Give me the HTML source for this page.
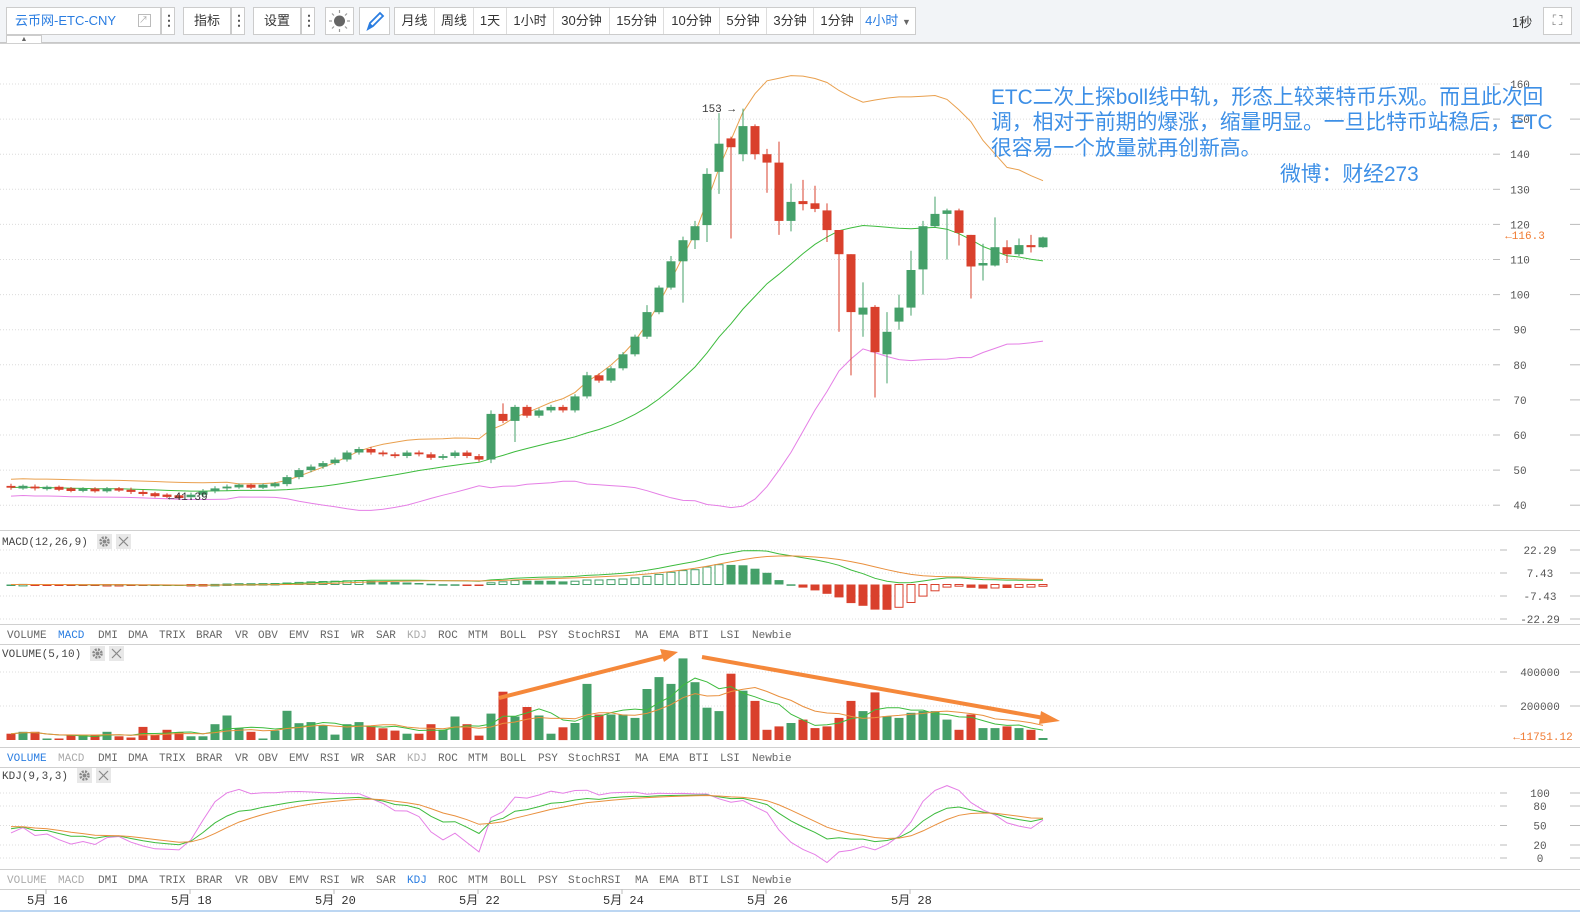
<!DOCTYPE html>
<html><head><meta charset="utf-8"><style>
*{margin:0;padding:0;box-sizing:border-box}
body{width:1580px;height:913px;overflow:hidden;background:#fff;font-family:"Liberation Sans","Noto Sans CJK SC",sans-serif;position:relative}
#tb{position:absolute;left:0;top:0;width:1580px;height:43px;background:#f2f4f7;border-bottom:1px solid #c8c8c8}
.b{position:absolute;top:7px;height:28px;background:#fff;border:1px solid #ccc;font-size:13px;color:#333;line-height:26px;text-align:center}
.dots{position:absolute;top:7px;height:28px;width:14px;border:1px solid #ccc;background:#fff;color:#555;font-size:14px;line-height:24px;text-align:center;font-weight:bold}
.pg{position:absolute;top:7px;left:394px;height:28px;border:1px solid #ccc;background:#fff;display:flex}
.pg span{display:block;height:26px;line-height:26px;font-size:13px;color:#333;text-align:center;border-right:1px solid #ddd}
svg{position:absolute;left:0;top:0}
</style></head><body>
<div id="tb">
<div class="b" style="left:6px;width:155px;text-align:left;padding-left:8px;color:#2a7de1">云币网-ETC-CNY<span style="position:absolute;left:131px;top:6px;width:13px;height:13px;border:1px solid #bbb;font-size:9px;line-height:11px;color:#aaa">↗</span></div>
<div class="dots" style="left:161px">⋮</div>
<div class="b" style="left:183px;width:48px">指标</div>
<div class="dots" style="left:231px">⋮</div>
<div class="b" style="left:253px;width:48px">设置</div>
<div class="dots" style="left:301px">⋮</div>
<div class="b" style="left:325px;width:29px"><svg width="27" height="26" style="position:static"><circle cx="13.5" cy="13" r="5.5" fill="#666"/><g stroke="#999" stroke-width="1.2"><line x1="13.5" y1="2" x2="13.5" y2="5"/><line x1="13.5" y1="21" x2="13.5" y2="24"/><line x1="3" y1="13" x2="6" y2="13"/><line x1="21" y1="13" x2="24" y2="13"/><line x1="6" y1="5.5" x2="8" y2="7.5"/><line x1="19" y1="18.5" x2="21" y2="20.5"/><line x1="6" y1="20.5" x2="8" y2="18.5"/><line x1="19" y1="7.5" x2="21" y2="5.5"/></g></svg></div>
<div class="b" style="left:359px;width:31px"><svg width="29" height="26" style="position:static"><path d="M8 21 L10 15 L20 5 L23 8 L13 18 Z" fill="none" stroke="#2a7de1" stroke-width="1.8"/><path d="M8 21 L10 15 L13 18Z" fill="#2a7de1"/></svg></div>
<div class="pg">
<span style="width:40px">月线</span><span style="width:39px">周线</span><span style="width:33px">1天</span><span style="width:47px">1小时</span><span style="width:56px">30分钟</span><span style="width:54px">15分钟</span><span style="width:56px">10分钟</span><span style="width:47px">5分钟</span><span style="width:47px">3分钟</span><span style="width:47px">1分钟</span><span style="width:54px;color:#2a7de1;border-right:none">4小时 <span style="display:inline;border:none;font-size:9px;color:#666">▼</span></span>
</div>
<div style="position:absolute;left:1512px;top:12px;font-size:13px;color:#333">1秒</div>
<div class="b" style="left:1543px;width:29px;color:#777;font-size:14px;line-height:24px">⛶</div>
<div style="position:absolute;left:6px;top:35px;width:36px;height:8px;background:#fff;border:1px solid #ccc;border-bottom:none;font-size:7px;line-height:8px;text-align:center;color:#666">▲</div>
</div>
<svg id="s" width="1580" height="913" style="top:0"></svg>
<script>
var cl=[45,45.3,44.8,45,44.6,44.3,44.5,44.2,44.6,44.4,43.8,43.2,42.8,42.6,42.3,43,44,44.8,45.3,45.6,45.2,45.6,46,
48,50,51,52,53,55,56,55,54.5,54,55,54.5,53.5,54,55,54,53,
66,64,68,65.5,67,68,67,71,77,75.5,79,83,88,95,102,109.5];
var late=[[109.5,115.5,116.5,97.7],[115.5,119.5,121,113],[119.8,134.4,136,115],[135,143,151.7,128.7],[144.5,142,145,116],[140,148,153,138],[148,140,148.5,138.5],[140,137.6,141.5,129],[137.6,121,143.6,117],[121,126.4,131.6,118],[126.4,126,132.7,124],[126,124.4,131,123.5],[124,118.4,126,115],[118.4,111.5,118.4,89.4],[111.5,95,111.5,77],[94.3,96.3,103.5,88],[96.5,83.6,97,70.7],[83,89.4,95,74.7],[92.3,96.3,100,90],[96.3,107,112.5,94],[107.2,119.5,121,100],[119.5,123,127.9,119],[123,124,124.5,110],[124,117.6,124.5,114],[117,108,117,98.9],[108.3,109,114.5,104],[108.3,113.5,122,108],[113.5,111.5,115.5,109],[111.5,114.1,116,111],[114.1,113.5,117,112],[113.5,116.3,116.5,113.3]];
var O=[],C=[],H=[],L=[],N=87;
for(var i=0;i<56;i++){var o=i?cl[i-1]:45.5,c=cl[i];O.push(o);C.push(c);H.push(Math.max(o,c)+0.6);L.push(Math.min(o,c)-0.6);}
H[41]=69;L[42]=58;H[40]=67;L[40]=52;H[48]=78;H[53]=97;H[55]=111;
late.forEach(function(a){O.push(a[0]);C.push(a[1]);H.push(a[2]);L.push(a[3]);});
var V=[37000,48000,48000,9000,9000,28000,28000,28000,48000,22000,15000,77000,30000,60000,45000,22000,22000,93000,144000,69000,48000,9000,55000,172000,99000,105000,85000,32000,93000,105000,80000,69000,55000,37000,37000,93000,60000,138000,93000,26000,155000,284000,138000,194000,144000,37000,75000,100000,330000,150000,150000,150000,130000,300000,370000,330000,480000,340000,190000,170000,390000,290000,230000,60000,80000,100000,120000,70000,80000,130000,230000,170000,280000,140000,130000,160000,170000,170000,120000,60000,150000,70000,70000,80000,70000,60000,11751];
function X(i){return 11+12*i}
function Y(p){return 84+(160-p)*3.51}
function MY(v){return 584.5-v*1.548}
function VY(v){return 740-v*0.00017}
function KY(v){return 858-v*0.65}
var G='#45a069',R='#d9402c',s='';
function ln(x1,y1,x2,y2,c,w,d){s+='<line x1="'+x1+'" y1="'+y1+'" x2="'+x2+'" y2="'+y2+'" stroke="'+c+'" stroke-width="'+(w||1)+'"'+(d?' stroke-dasharray="'+d+'"':'')+'/>';}
function tx(x,y,t,c,sz,anc,ff){s+='<text x="'+x+'" y="'+y+'" fill="'+(c||'#555')+'" font-size="'+(sz||11)+'" font-family="'+(ff||'Liberation Mono,monospace')+'"'+(anc?' text-anchor="'+anc+'"':'')+'>'+t+'</text>';}
function pl(arr,fy,c,st){var p='';for(var i=st||0;i<N;i++){if(arr[i]==null)continue;p+=(p?'L':'M')+X(i)+' '+fy(arr[i]).toFixed(1);}s+='<path d="'+p+'" fill="none" stroke="'+c+'" stroke-width="1"/>';}
[43,530,624,644,747,767,869,889].forEach(function(y){ln(0,y+.5,1580,y+.5,'#d0d0d0');});
ln(0,911,1580,911,'#bcd6f2',2);
function grid(y,lab,col,cx,gx){cx=cx||1540;gx=gx||1497;ln(0,y,gx,y,'#dcdcdc',1,'1,2');ln(gx+3,y,gx+10,y,'#bbb');ln(1570,y,1580,y,'#bbb');tx(cx,y+4,lab,col||'#555',11,'middle');}
for(var p=40;p<=160;p+=10)grid(Y(p),p,null,1520,1490);
[22.29,7.43,-7.43,-22.29].forEach(function(v){grid(MY(v),v);});
grid(VY(400000),'400000');grid(VY(200000),'200000');
[100,80,50,20,0].forEach(function(v){grid(KY(v),v);});
tx(1525,239,'←116.3','#f07a30',11,'middle');
tx(1543,740,'←11751.12','#f07a30',11,'middle');
var MA=[],UP=[],DN=[];
for(var i=0;i<N;i++){var n=Math.min(i+1,20),sm=0;for(var j=i-n+1;j<=i;j++)sm+=C[j];var m=sm/n,v=0;for(var j=i-n+1;j<=i;j++)v+=(C[j]-m)*(C[j]-m);var sd=Math.sqrt(v/n);if(n<20)sd=Math.max(sd,1.2);MA.push(m);UP.push(m+2*sd);DN.push(m-2*sd);}
pl(UP,Y,'#e9a04e');pl(DN,Y,'#e57fe6');pl(MA,Y,'#3dbb3d');
for(var i=0;i<N;i++){var up=C[i]>=O[i],c=up?G:R,x=X(i);ln(x,Y(H[i]),x,Y(L[i]),c);var t=Y(Math.max(O[i],C[i])),b=Y(Math.min(O[i],C[i]));if(b-t<1.5){t-=0.8;b+=0.8;}s+='<rect x="'+(x-4.5)+'" y="'+t.toFixed(1)+'" width="9" height="'+(b-t).toFixed(1)+'" fill="'+c+'"/>';}
tx(735,112,'153 →','#333',11,'end');tx(168,500,'←41.39','#333',11);
var af='Liberation Sans,Noto Sans CJK SC,sans-serif';
tx(991,104,'ETC二次上探boll线中轨，形态上较莱特币乐观。而且此次回','#3d8fe6',20.8,null,af);
tx(991,129,'调，相对于前期的爆涨，缩量明显。一旦比特币站稳后，ETC','#3d8fe6',20.8,null,af);
tx(991,155,'很容易一个放量就再创新高。','#3d8fe6',20.8,null,af);
tx(1280,181,'微博：财经273','#3d8fe6',20.8,null,af);
function ema(a,n){var r=[],k=2/(n+1);a.forEach(function(v,i){r.push(i?r[i-1]+k*(v-r[i-1]):v)});return r;}
var e12=ema(C,12),e26=ema(C,26),DIF=e12.map(function(v,i){return v-e26[i]}),DEA=ema(DIF,9);
for(var i=0;i<N;i++){var h=2*(DIF[i]-DEA[i])*1.1,ph=i?2*(DIF[i-1]-DEA[i-1])*1.1:0,x=X(i),y0=584.5,y1=MY(h);var c=h>=0?G:R;var t=Math.min(y0,y1),hh=Math.max(Math.abs(y1-y0),1.5);var hollow=(h>=0&&h>ph)||(h<0&&h>ph);
if(hollow)s+='<rect x="'+(x-4)+'" y="'+t.toFixed(1)+'" width="8" height="'+hh.toFixed(1)+'" fill="#fff" stroke="'+c+'"/>';else s+='<rect x="'+(x-4.5)+'" y="'+t.toFixed(1)+'" width="9" height="'+hh.toFixed(1)+'" fill="'+c+'"/>';}
pl(DIF,MY,'#3dbb3d');pl(DEA,MY,'#e9903e');
for(var i=0;i<N;i++){var c=C[i]>=O[i]?G:R,y=VY(V[i]);s+='<rect x="'+(X(i)-4.5)+'" y="'+y.toFixed(1)+'" width="9" height="'+(740-y).toFixed(1)+'" fill="'+c+'"/>';}
function sma(a,n){return a.map(function(v,i){var k=Math.min(i+1,n),t=0;for(var j=i-k+1;j<=i;j++)t+=a[j];return t/k;});}
pl(sma(V,5),VY,'#3dbb3d');pl(sma(V,10),VY,'#e9903e');
s+='<line x1="499" y1="698" x2="664" y2="656" stroke="#f5883a" stroke-width="4"/><polygon points="678,652 660,649 664,662" fill="#f5883a"/>';
s+='<line x1="702" y1="657" x2="1044" y2="718" stroke="#f5883a" stroke-width="4"/><polygon points="1060,721 1041,711 1039,724" fill="#f5883a"/>';
var K=[],D=[],J=[],k=50,d=50;
for(var i=0;i<N;i++){var hh=-1e9,ll=1e9;for(var j=Math.max(0,i-8);j<=i;j++){hh=Math.max(hh,H[j]);ll=Math.min(ll,L[j]);}var rsv=hh>ll?(C[i]-ll)/(hh-ll)*100:50;k=2/3*k+rsv/3;d=2/3*d+k/3;K.push(k);D.push(d);J.push(3*k-2*d);}
pl(J,KY,'#e57fe6');pl(K,KY,'#3dbb3d');pl(D,KY,'#e9903e');
function title(y,t,gx){tx(2,y+4,t,'#444',11);s+='<rect x="'+gx+'" y="'+(y-7)+'" width="15" height="15" fill="#e8e8e8"/><circle cx="'+(gx+7.5)+'" cy="'+(y+0.5)+'" r="4" fill="none" stroke="#888" stroke-width="2.5" stroke-dasharray="2,1.2"/><circle cx="'+(gx+7.5)+'" cy="'+(y+0.5)+'" r="2" fill="#888"/>';s+='<rect x="'+(gx+19)+'" y="'+(y-7)+'" width="15" height="15" fill="#e8e8e8"/><path d="M'+(gx+22)+' '+(y-4)+'l9 9m0-9l-9 9" stroke="#888" stroke-width="1.2"/>';}
title(541,'MACD(12,26,9)',97);title(653,'VOLUME(5,10)',90);title(775,'KDJ(9,3,3)',77);
var tabs=[['VOLUME',7],['MACD',58],['DMI',98],['DMA',128],['TRIX',159],['BRAR',196],['VR',235],['OBV',258],['EMV',289],['RSI',320],['WR',351],['SAR',376],['KDJ',407],['ROC',438],['MTM',468],['BOLL',500],['PSY',538],['StochRSI',568],['MA',635],['EMA',659],['BTI',689],['LSI',720],['Newbie',752]];
function tabrow(y,act){tabs.forEach(function(t){var c=t[0]==act?'#2a7de1':(t[0]=='KDJ'||(act!='MACD'&&t[0]=='MACD')||(act=='KDJ'&&t[0]=='VOLUME')?'#aaa':'#666');tx(t[1],y,t[0],c,11);});}
tabrow(638,'MACD');tabrow(761,'VOLUME');tabrow(883,'KDJ');
[['5月 16',27],['5月 18',171],['5月 20',315],['5月 22',459],['5月 24',603],['5月 26',747],['5月 28',891]].forEach(function(d){ln(d[1]+19,889,d[1]+19,894,'#bbb');tx(d[1],904,d[0],'#333',12,null,'Liberation Mono,Noto Sans CJK SC,monospace');});
document.getElementById('s').innerHTML=s;
</script>
</body></html>
